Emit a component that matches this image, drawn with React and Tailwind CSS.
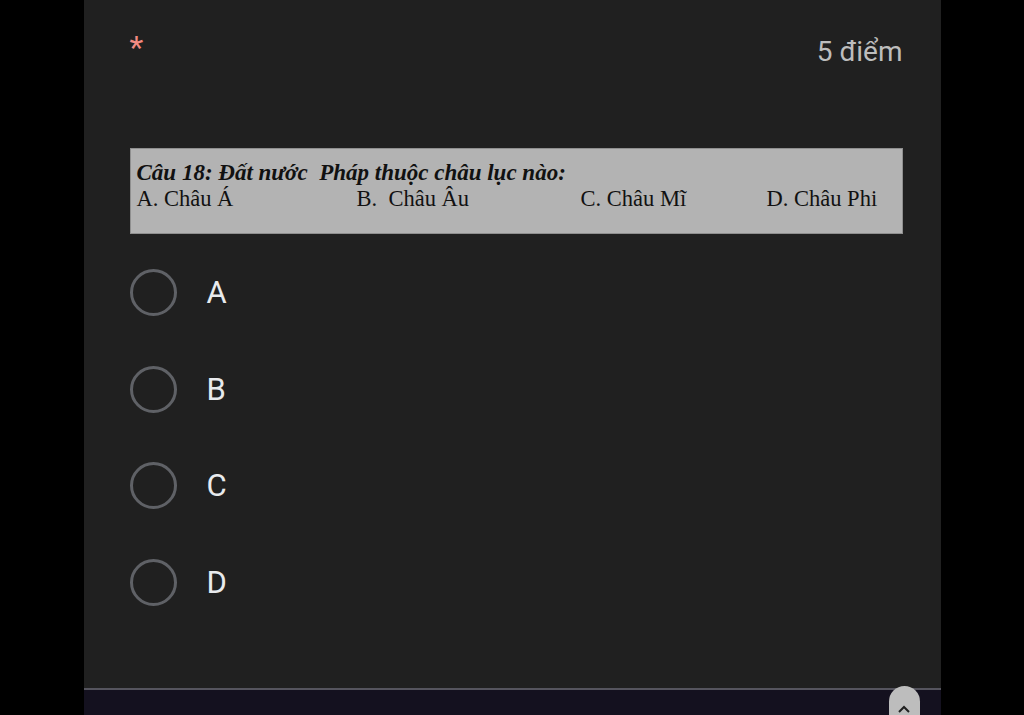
import React, { useState } from "react";

const options = ["A", "B", "C", "D"];

const App = () => {
  const [picked, setPicked] = useState(null);

  return (
    <div className="w-full h-[715px] bg-black flex justify-center overflow-hidden">
      <div className="w-[857px] h-full bg-[#202020] flex flex-col relative">
        <div className="flex-1 pl-[46px] pr-[38px]">
          <div className="flex justify-between items-start pt-[30px]">
            <span
              className="text-[#f28b82] text-[32px] leading-none pt-[1px]"
              style={{ fontFamily: "Roboto, sans-serif" }}
            >
              *
            </span>
            <span
              className="text-[#bdbdbd] text-[28px] leading-none pt-[8px]"
              style={{ fontFamily: "Roboto, sans-serif" }}
            >
              5 điểm
            </span>
          </div>

          <div
            className="mt-[82px] h-[86px] bg-[#b3b3b3] border border-[#8f8f8f] pl-[6px] pt-[11px] text-[#111]"
            style={{ fontFamily: '"Liberation Serif", "Times New Roman", serif' }}
          >
            <div className="text-[23px] font-bold italic leading-[26px] whitespace-pre">
              Câu 18: Đất nước  Pháp thuộc châu lục nào:
            </div>
            <div className="flex text-[22.5px] leading-[26px] whitespace-pre">
              <span className="w-[220px]">A. Châu Á</span>
              <span className="w-[224px]">B.  Châu Âu</span>
              <span className="w-[186px]">C. Châu Mĩ</span>
              <span>D. Châu Phi</span>
            </div>
          </div>

          <div className="mt-[35px] flex flex-col">
            {options.map((o) => (
              <button
                key={o}
                onClick={() => setPicked(o)}
                className="h-[96.5px] flex items-start gap-[30px] text-left"
              >
                <span className="w-[47px] h-[47px] rounded-full border-[3px] border-[#5f6166] flex items-center justify-center">
                  {picked === o && (
                    <span className="w-[23px] h-[23px] rounded-full bg-[#8ab4f8]" />
                  )}
                </span>
                <span
                  className="text-[#e8eaed] text-[31px] leading-[47px]"
                  style={{ fontFamily: "Roboto, sans-serif" }}
                >
                  {o}
                </span>
              </button>
            ))}
          </div>
        </div>

        <div className="h-[2px] bg-[#55545e]" />
        <div className="h-[25px] bg-[#14111f]" />

        <div className="absolute left-[805px] top-[686px] w-[31px] h-[40px] rounded-t-full bg-[#bdbdbd] flex justify-center pt-[18px]">
          <svg width="14" height="10" viewBox="0 0 14 10" fill="none">
            <path d="M2 8 L7 3 L12 8" stroke="#202020" strokeWidth="2" />
          </svg>
        </div>
      </div>
    </div>
  );
};

export default App;
